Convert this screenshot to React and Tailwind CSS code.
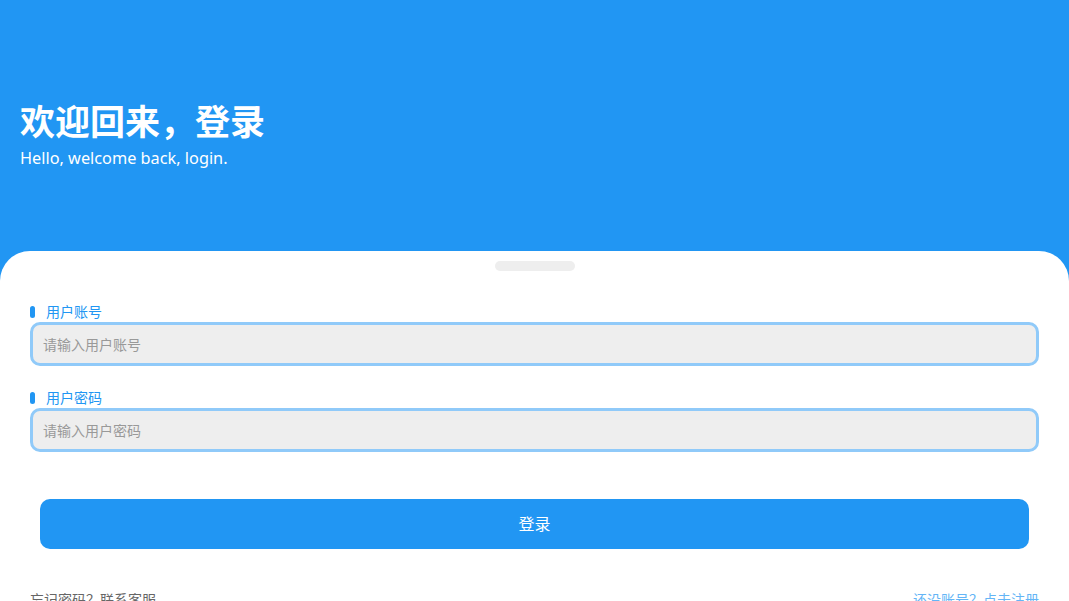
import React from "react";

const font = { fontFamily: '"Noto Sans", "Noto Sans CJK SC", sans-serif' };

function Field({ label, placeholder, type = "text" }) {
  return (
    <div>
      <div className="flex items-center h-5">
        <span className="w-[5px] h-3 rounded-full bg-[#2196f3] mr-[11px]" />
        <span className="text-[14px] leading-none text-[#2196f3]">{label}</span>
      </div>
      <input
        type={type}
        placeholder={placeholder}
        className="block w-full h-[44px] rounded-[10px] border-[3px] border-[#90caf9] bg-[#eeeeee] px-[10px] text-[14px] text-[#333] placeholder:text-[#999] outline-none"
      />
    </div>
  );
}

export default function App() {
  return (
    <div className="h-screen overflow-hidden bg-[#2196f3] flex flex-col" style={font}>
      {/* Header */}
      <header className="h-[251px] shrink-0 px-5 pt-[100px] text-white">
        <h1 className="text-[35px] font-bold leading-[44px]">欢迎回来，登录</h1>
        <p className="text-[16.3px] leading-5 mt-[4px]">Hello, welcome back, login.</p>
      </header>

      {/* Card */}
      <main className="flex-1 bg-white rounded-t-[30px] px-[30px] pt-[10px]">
        <div className="w-20 h-2.5 mx-auto rounded-full bg-[#eeeeee]" />

        <div className="mt-[31px] flex flex-col gap-[22px]">
          <Field label="用户账号" placeholder="请输入用户账号" />
          <Field label="用户密码" placeholder="请输入用户密码" type="password" />
        </div>

        <button className="mt-[47px] mx-[10px] w-[calc(100%-20px)] h-[50px] rounded-[10px] bg-[#2196f3] text-white text-[16px]">
          登录
        </button>

        <div className="mt-[41px] flex justify-between text-[14px] leading-5">
          <span className="text-[#666]">忘记密码？联系客服</span>
          <span className="text-[#64b5f6]">还没账号？点击注册</span>
        </div>
      </main>
    </div>
  );
}
